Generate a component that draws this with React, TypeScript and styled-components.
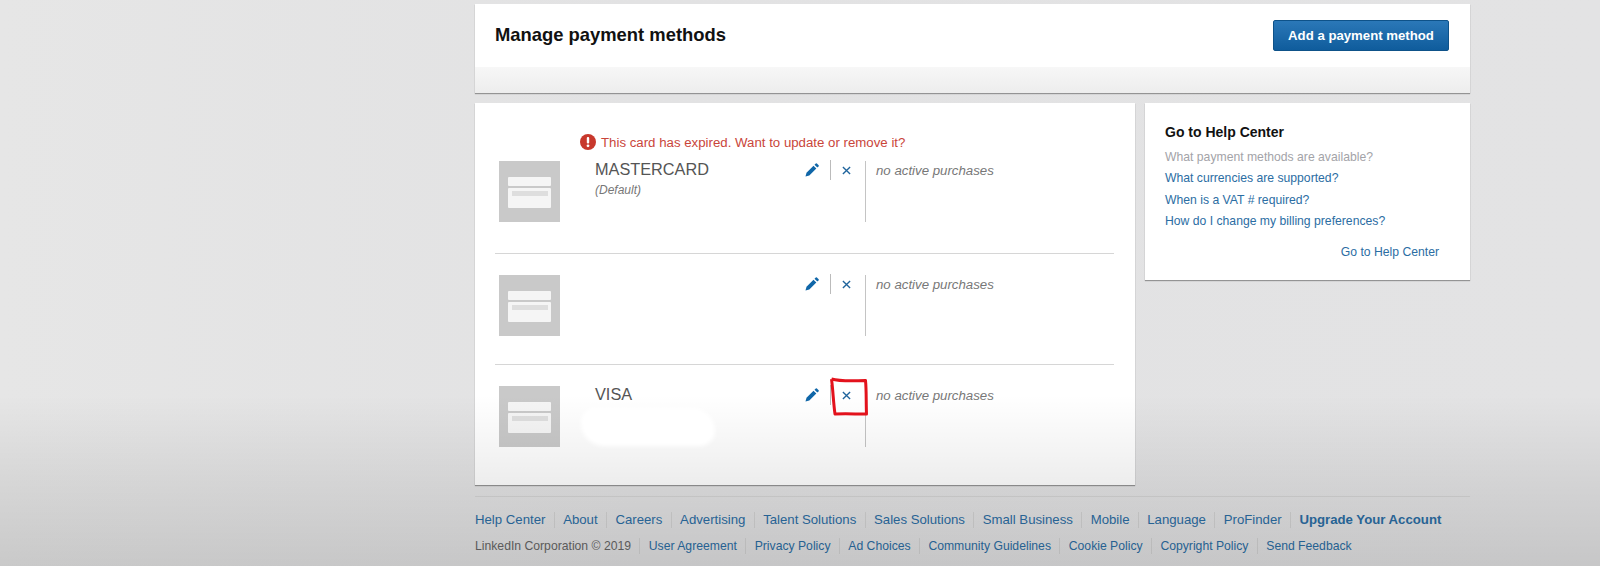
import React from "react"
import styled, { createGlobalStyle } from "styled-components"

const GlobalStyle = createGlobalStyle`
  html, body {
    margin: 0;
    padding: 0;
    height: 100%;
  }
  body {
    background: #e3e3e4;
    font-family: "Liberation Sans", Arial, sans-serif;
    overflow: hidden;
  }
`

const Page = styled.div`
  position: relative;
  height: 566px;
  overflow: hidden;
  background: linear-gradient(90deg, #e6e6e6 0%, #e2e2e3 40%, #e3e3e4 100%);
`

const Fade = styled.div`
  position: absolute;
  inset: 0;
  z-index: 1;
  pointer-events: none;
  background: linear-gradient(
    180deg,
    rgba(0, 0, 0, 0) 0,
    rgba(0, 0, 0, 0) 395px,
    rgba(0, 0, 0, 0.07) 484px,
    rgba(0, 0, 0, 0.125) 566px
  );
`

const Content = styled.div`
  width: 995px;
  margin-left: 475px;
  padding-top: 4px;
`

const Panel = styled.section`
  background: #fff;
  box-shadow: 0 1px 1px rgba(0, 0, 0, 0.35);
`

const HeaderTop = styled.div`
  display: flex;
  align-items: center;
  justify-content: space-between;
  height: 63px;
  padding: 0 21px 0 20px;
`

const HeaderBand = styled.div`
  height: 26px;
  background: linear-gradient(180deg, #f7f7f7, #ededed);
`

const Title = styled.h1`
  margin: 0 0 1px;
  font-size: 18.4px;
  font-weight: bold;
  color: #111;
`

const AddButton = styled.button`
  width: 176px;
  height: 31px;
  padding: 0;
  border: 1px solid #0e5289;
  border-radius: 2px;
  background: linear-gradient(180deg, #2b78b8, #0f5c9c);
  color: #fff;
  font: bold 13.2px "Liberation Sans", Arial, sans-serif;
`

const Columns = styled.div`
  display: flex;
  align-items: flex-start;
  gap: 10px;
  margin-top: 10px;
`

const MethodsPanel = styled(Panel)`
  box-sizing: border-box;
  width: 660px;
  height: 382px;
  padding: 29px 21px 0 20px;
`

const Alert = styled.div`
  display: flex;
  align-items: center;
  gap: 5px;
  height: 20px;
  margin: 0 0 9px 85px;
  font-size: 13.25px;
  color: #c9453a;
`

const Row = styled.div<{ $height: number; $divided?: boolean }>`
  display: flex;
  align-items: flex-start;
  height: ${p => p.$height}px;
  padding: ${p => (p.$divided ? "21px" : "0")} 0 0 4px;
  border-top: ${p => (p.$divided ? "1px solid #d6d6d6" : "0")};
  box-sizing: border-box;
`

const Details = styled.div`
  position: relative;
  width: 208px;
  margin-left: 35px;
`

const CardName = styled.div`
  font-size: 16.3px;
  line-height: 16px;
  color: #555;
`

const DefaultNote = styled.div`
  margin-top: 6px;
  font-size: 12px;
  line-height: 15px;
  font-style: italic;
  color: #777;
`

const Smudge = styled.div`
  position: absolute;
  z-index: 2;
  top: 22px;
  left: -14px;
  width: 134px;
  height: 38px;
  border-radius: 14px 24px 16px 24px;
  background: #fff;
  filter: blur(2px);
`

const Actions = styled.div`
  position: relative;
  display: flex;
  align-items: center;
  width: 62px;
  height: 18px;
`

const ActionIcon = styled.span`
  display: flex;
  align-items: center;
  justify-content: center;
  width: 18px;
  height: 18px;
`

const ActionSep = styled.span`
  width: 1px;
  height: 20px;
  margin: 0 6px 0 9px;
  background: #bbb;
`

const Marker = styled.svg`
  position: absolute;
  z-index: 2;
  top: -8px;
  left: 27px;
  width: 38px;
  height: 38px;
  overflow: visible;
`

const Purchases = styled.div`
  height: 61px;
  padding-left: 10px;
  border-left: 1px solid #c4c4c4;
  font-size: 13.25px;
  line-height: 19px;
  font-style: italic;
  color: #777;
`

const HelpPanel = styled(Panel)`
  box-sizing: border-box;
  width: 325px;
  height: 177px;
  padding: 20px 31px 0 20px;
`

const HelpTitle = styled.h2`
  margin: 0 0 6px;
  font-size: 14px;
  line-height: 18px;
  font-weight: bold;
  color: #111;
`

const HelpLink = styled.div<{ $muted?: boolean }>`
  font-size: 12.2px;
  line-height: 21.3px;
  color: ${p => (p.$muted ? "#a3a3a8" : "#2b6da3")};
`

const HelpMore = styled.div`
  margin-top: 11px;
  text-align: right;
  font-size: 12.2px;
  line-height: 18px;
  color: #2b6da3;
`

const Footer = styled.footer`
  margin-top: 11px;
  padding-top: 14px;
  border-top: 1px solid #d4d4d4;
`

const FooterRow = styled.div<{ $small?: boolean }>`
  display: flex;
  align-items: center;
  height: 18px;
  margin-bottom: 8px;
  white-space: nowrap;
  font-size: ${p => (p.$small ? 12.2 : 13.2)}px;

  span {
    padding: 0 8.4px;
  }
`

const FooterItem = styled.span<{ $plain?: boolean; $strong?: boolean }>`
  border-left: 1px solid #d2d2d2;
  line-height: 16px;
  color: ${p => (p.$plain ? "#666" : "#2b6da3")};
  font-weight: ${p => (p.$strong ? "bold" : "normal")};

  &:first-child {
    padding-left: 0;
    border-left: 0;
  }
`

const CardThumb = () => (
  <svg width="61" height="61" viewBox="0 0 61 61" style={{ flex: "none" }}>
    <rect width="61" height="61" fill="#c9c9c9" />
    <rect x="9" y="16" width="43" height="9" rx="1" fill="#f5f5f5" />
    <rect x="9" y="27" width="43" height="20" rx="1" fill="#f5f5f5" />
    <rect x="13" y="30" width="36" height="5" fill="#dedede" />
  </svg>
)

const Pencil = () => (
  <svg width="16" height="16" viewBox="0 0 16 16">
    <path d="M1.5 14.5l1-3.8 7-7 2.8 2.8-7 7z" fill="#0f66a8" />
    <path d="M10.5 2.8l1.3-1.3a.8.8 0 0 1 1.1 0l1.7 1.7a.8.8 0 0 1 0 1.1l-1.3 1.3z" fill="#0f66a8" />
  </svg>
)

const Cross = () => (
  <svg width="9" height="9" viewBox="0 0 10 10">
    <path d="M1 1l8 8M9 1L1 9" stroke="#1f649c" strokeWidth="1.5" fill="none" />
  </svg>
)

const AlertIcon = () => (
  <svg width="16" height="16" viewBox="0 0 16 16">
    <circle cx="8" cy="8" r="8" fill="#c8382c" />
    <rect x="6.8" y="3" width="2.4" height="6.5" rx="1" fill="#fff" />
    <circle cx="8" cy="11.8" r="1.4" fill="#fff" />
  </svg>
)

const topLinks = [
  "Help Center",
  "About",
  "Careers",
  "Advertising",
  "Talent Solutions",
  "Sales Solutions",
  "Small Business",
  "Mobile",
  "Language",
  "ProFinder",
]

const legalLinks = [
  "User Agreement",
  "Privacy Policy",
  "Ad Choices",
  "Community Guidelines",
  "Cookie Policy",
  "Copyright Policy",
  "Send Feedback",
]

const helpLinks = [
  "What currencies are supported?",
  "When is a VAT # required?",
  "How do I change my billing preferences?",
]

const PaymentRow: React.FC<{
  name?: string
  note?: string
  height: number
  divided?: boolean
  hidden?: boolean
  marked?: boolean
}> = ({ name, note, height, divided, hidden, marked }) => (
  <Row $height={height} $divided={divided}>
    <CardThumb />
    <Details>
      <CardName>{name || "\u00a0"}</CardName>
      {note && <DefaultNote>{note}</DefaultNote>}
      {hidden && <Smudge />}
    </Details>
    <Actions>
      <ActionIcon>
        <Pencil />
      </ActionIcon>
      <ActionSep />
      <ActionIcon>
        <Cross />
      </ActionIcon>
      {marked && (
        <Marker viewBox="0 0 38 38">
          <path
            d="M1.5 1 C10 3.5 25 3 35.5 2.5 C36.5 12 36 24 36.5 36 C25 36 15 35.5 5 36 C3.5 26 3 12 1.5 1"
            fill="none"
            stroke="#e3121c"
            strokeWidth="3"
            strokeLinejoin="round"
          />
        </Marker>
      )}
    </Actions>
    <Purchases>no active purchases</Purchases>
  </Row>
)

const App: React.FC = () => (
  <Page>
    <GlobalStyle />
    <Content>
      <Panel>
        <HeaderTop>
          <Title>Manage payment methods</Title>
          <AddButton>Add a payment method</AddButton>
        </HeaderTop>
        <HeaderBand />
      </Panel>

      <Columns>
        <MethodsPanel>
          <Alert>
            <AlertIcon />
            This card has expired. Want to update or remove it?
          </Alert>
          <PaymentRow name="MASTERCARD" note="(Default)" height={92} />
          <PaymentRow height={111} divided />
          <PaymentRow name="VISA" height={100} divided hidden marked />
        </MethodsPanel>

        <HelpPanel>
          <HelpTitle>Go to Help Center</HelpTitle>
          <HelpLink $muted>What payment methods are available?</HelpLink>
          {helpLinks.map(link => (
            <HelpLink key={link}>{link}</HelpLink>
          ))}
          <HelpMore>Go to Help Center</HelpMore>
        </HelpPanel>
      </Columns>

      <Footer>
        <FooterRow>
          {topLinks.map(link => (
            <FooterItem key={link}>{link}</FooterItem>
          ))}
          <FooterItem $strong>Upgrade Your Account</FooterItem>
        </FooterRow>
        <FooterRow $small>
          <FooterItem $plain>LinkedIn Corporation © 2019</FooterItem>
          {legalLinks.map(link => (
            <FooterItem key={link}>{link}</FooterItem>
          ))}
        </FooterRow>
      </Footer>
    </Content>
    <Fade />
  </Page>
)

export default App
